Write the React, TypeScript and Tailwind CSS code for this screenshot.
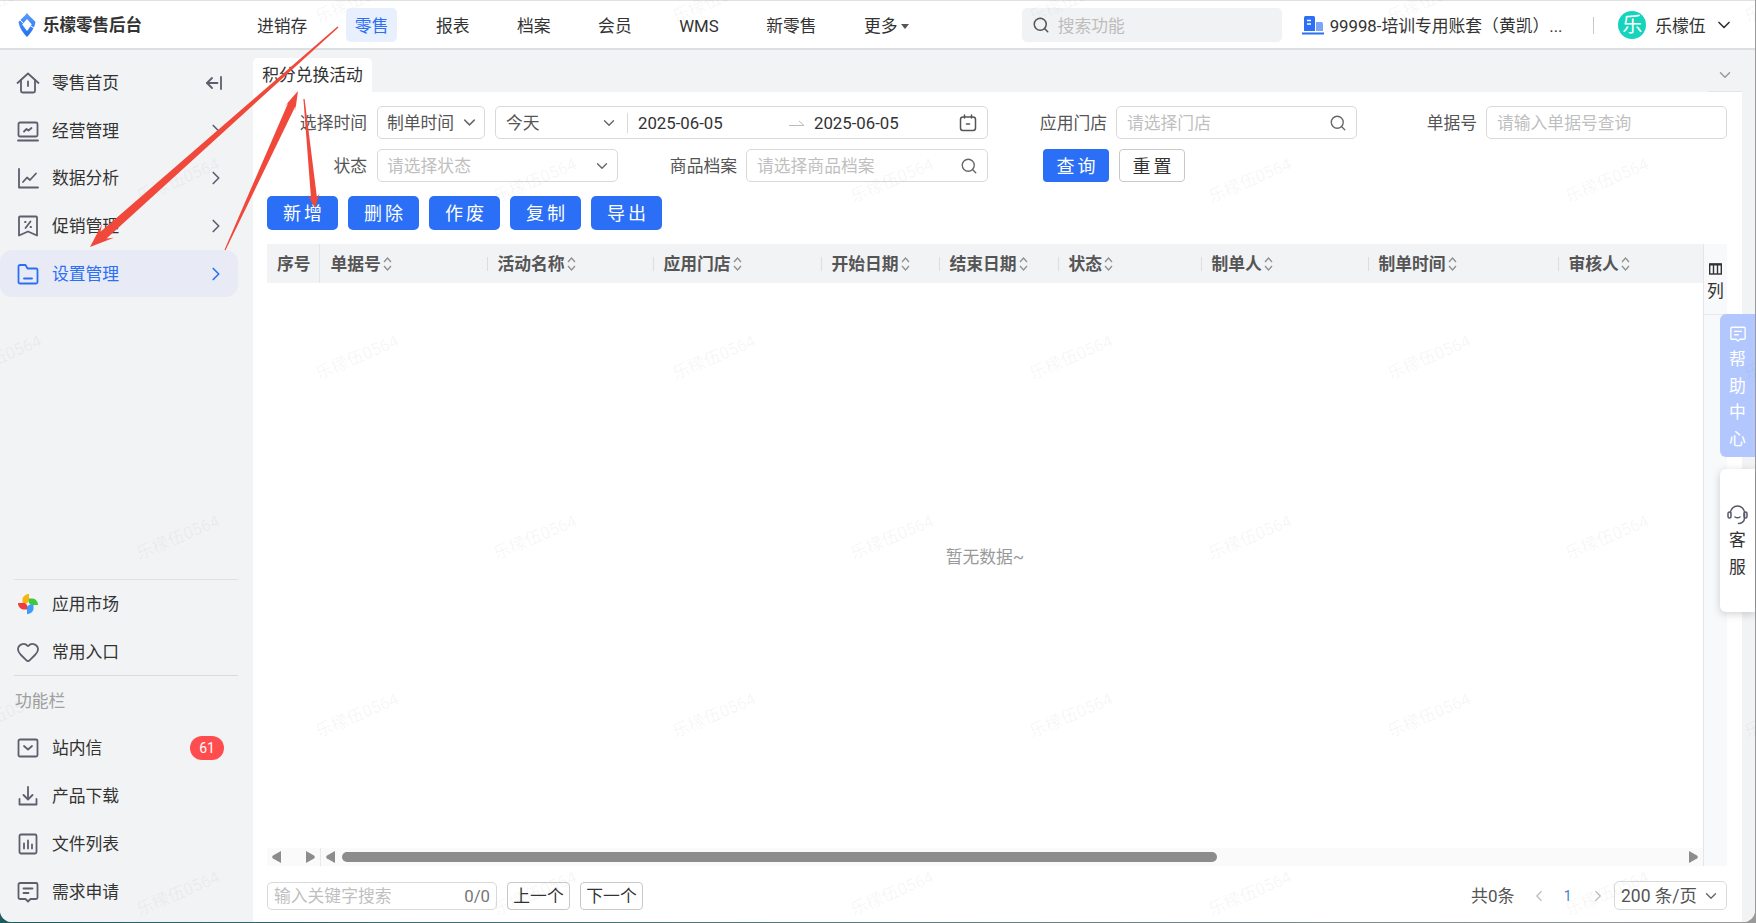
import React from "react";
import { ChevronDown, ChevronRight, ChevronLeft, Search, Heart } from "lucide-react";

const G = { fill: "none", stroke: "currentColor", strokeWidth: 1.8, strokeLinecap: "round", strokeLinejoin: "round" } as const;

const IHome = () => (
  <svg width="24" height="24" viewBox="0 0 24 24" {...G}>
    <path d="M1.5 12 12 2.5 22.5 12" />
    <path d="M5 9.5V20a1.5 1.5 0 0 0 1.5 1.5h11A1.5 1.5 0 0 0 19 20V9.5" />
    <path d="M12 10.5v4.5" />
  </svg>
);
const ILaptop = () => (
  <svg width="24" height="24" viewBox="0 0 24 24" {...G}>
    <rect x="2.5" y="3.5" width="19" height="14" rx="1.5" />
    <path d="M2 21.5h20" />
    <path d="M8 12.5l2.5-2.5 2 1.5 3-2.5" />
  </svg>
);
const IChart = () => (
  <svg width="24" height="24" viewBox="0 0 24 24" {...G}>
    <path d="M3 3v18.5h19" />
    <path d="M7 16l4-4.5 3 2.5 6-6.5" />
  </svg>
);
const IPromo = () => (
  <svg width="24" height="24" viewBox="0 0 24 24" {...G}>
    <path d="M4 2.5h16a1 1 0 0 1 1 1v18l-9-4-9 4v-18a1 1 0 0 1 1-1Z" />
    <path d="M14.5 7.5l-5 6.5" />
    <path d="M9 8h.6M14.5 13h.6" />
  </svg>
);
const IFolder = () => (
  <svg width="24" height="24" viewBox="0 0 24 24" {...G}>
    <path d="M2.5 4.5a1.5 1.5 0 0 1 1.5-1.5h5.5l2 3.5H20A1.5 1.5 0 0 1 21.5 8v12a1.5 1.5 0 0 1-1.5 1.5H4A1.5 1.5 0 0 1 2.5 20Z" />
    <path d="M8 16.5h8" />
  </svg>
);
const blade = "M13 2v7.200L10.800 11.200H6.500V7.500C6.500 4.500 9.500 2 13 2Z";
const IMarket = () => (
  <svg width="24" height="24" viewBox="0 0 24 24">
    <path d={blade} fill="#fbb40f" />
    <path d={blade} fill="#3fc93f" transform="rotate(90 12 12)" />
    <path d={blade} fill="#3d9bfa" transform="rotate(180 12 12)" />
    <path d={blade} fill="#f03c3c" transform="rotate(270 12 12)" />
  </svg>
);
const IMail = () => (
  <svg width="24" height="24" viewBox="0 0 24 24" {...G}>
    <rect x="2.5" y="3.5" width="19" height="17" rx="1.5" />
    <path d="M8 10l4 3.5 4-3.5" />
  </svg>
);
const IDownload = () => (
  <svg width="24" height="24" viewBox="0 0 24 24" {...G}>
    <path d="M3.5 15v5.500h17V15" />
    <path d="M12 3v12" />
    <path d="M7.500 11l4.500 4.500 4.500-4.500" />
  </svg>
);
const IFile = () => (
  <svg width="24" height="24" viewBox="0 0 24 24" {...G}>
    <rect x="3.500" y="2.500" width="17" height="19" rx="1.500" />
    <path d="M8 11.500v5M12 8.500v8M16 12.500v4" />
  </svg>
);
const IFeedback = ({ size = 24 }: { size?: number }) => (
  <svg width={size} height={size} viewBox="0 0 24 24" {...G}>
    <path d="M4 3h16a1.500 1.500 0 0 1 1.500 1.500v13A1.500 1.500 0 0 1 20 19h-5.500L12 21.500 9.500 19H4a1.500 1.500 0 0 1-1.500-1.500v-13A1.500 1.500 0 0 1 4 3Z" />
    <path d="M7.500 8.500h9M7.500 13h5" />
  </svg>
);
const ICollapse = () => (
  <svg width="18" height="18" viewBox="0 0 18 18" fill="none" stroke="currentColor" strokeWidth="1.8" strokeLinecap="round" strokeLinejoin="round">
    <path d="M16 3v12" />
    <path d="M12.500 9H2" />
    <path d="M7 4 2 9l5 5" />
  </svg>
);
const Sort = () => (
  <svg width="9" height="16" viewBox="0 0 9 16" fill="none" stroke="#8f8f8f" strokeWidth="1.300" className="ml-[2px] shrink-0">
    <path d="M1 6l3.500-4L8 6" />
    <path d="M1 10l3.500 4L8 10" />
  </svg>
);
const Logo = () => (
  <svg width="18" height="24" viewBox="0 0 18 24">
    <defs>
      <linearGradient id="lg" x1="0" y1="0" x2="0" y2="1">
        <stop offset="0" stopColor="#5a9dfb" />
        <stop offset="1" stopColor="#1f6ff0" />
      </linearGradient>
    </defs>
    <path d="M9 0C11 3 15 6 17.500 9C16.500 15 12.500 20.500 9 24C5.500 20.500 1.500 15 .5 9C3 6 7 3 9 0Z" fill="url(#lg)" />
    <path d="M9 6 13.800 11.500 9 18 4.200 11.500Z" fill="#ffffff" />
    <path d="M2 7 5.500 10.500M16 15 12.500 13" stroke="#ffffff" strokeWidth="1" />
  </svg>
);
const Building = () => (
  <svg width="22" height="19" viewBox="0 0 22 19">
    <path d="M2 1.500A1.500 1.500 0 0 1 3.500 0h8A1.500 1.500 0 0 1 13 1.500V15H2Z" fill="#2a6ff5" />
    <path d="M14 6h5.500A1.500 1.500 0 0 1 21 7.500V15h-7Z" fill="#7aa5f8" />
    <path d="M0 16.500h22V18.500H0Z" fill="#2a6ff5" />
    <path d="M5 4.500h4M5 8h4" stroke="#fff" strokeWidth="1.600" />
  </svg>
);
const Headset = () => (
  <svg width="21" height="21" viewBox="0 0 21 21" fill="none" stroke="#565a68" strokeWidth="1.500" strokeLinecap="round">
    <path d="M3.500 9a7 7 0 0 1 14 0v4" />
    <rect x="1" y="8" width="3" height="6" rx="1.500" />
    <rect x="17" y="8" width="3" height="6" rx="1.500" />
    <path d="M17.500 14c0 3.500-3 5.500-6 5.500" />
    <path d="M8 13c1.500 1 3.500 1 5 0" />
  </svg>
);

const Arrow = ({ x1, y1, x2, y2, head, headW, neck, tail = 0.7 }: { x1: number; y1: number; x2: number; y2: number; head: number; headW: number; neck: number; tail?: number }) => {
  const dx = x2 - x1;
  const dy = y2 - y1;
  const L = Math.hypot(dx, dy);
  const ux = dx / L;
  const uy = dy / L;
  const p = (t: number, w: number) => `${(x1 + ux * t - uy * w).toFixed(1)},${(y1 + uy * t + ux * w).toFixed(1)}`;
  const pts = [p(0, tail), p(L - head * 0.75, neck), p(L - head, headW), p(L, 0), p(L - head, -headW), p(L - head * 0.75, -neck), p(0, -tail)].join(" ");
  return <polygon points={pts} fill="#f0493c" />;
};

const rowIcon = "w-6 h-6 flex items-center justify-center shrink-0";

function SideRow({ icon, label, active, chevron, extra, tall }: { icon: React.ReactNode; label: string; active?: boolean; chevron?: boolean; extra?: React.ReactNode; tall?: boolean }) {
  return (
    <div className={`${tall ? "h-[48px]" : "h-[47.6px]"} w-[238px] flex items-center pl-4 rounded-[12px] ${active ? "bg-[#e8ebf5] text-[#2a6ff5]" : "text-[#333333]"}`}>
      <span className={`${rowIcon} ${active ? "text-[#2a6ff5]" : "text-[#5b5f6e]"}`}>{icon}</span>
      <span className="ml-3 flex-1">{label}</span>
      {chevron && <ChevronRight size={22} strokeWidth={1.800} className={`mr-[11px] ${active ? "text-[#2a6ff5]" : "text-[#5b5f6e]"}`} />}
      {extra}
    </div>
  );
}

function Sidebar() {
  return (
    <aside className="w-[253px] shrink-0 bg-[#f2f3f5] flex flex-col pt-[9.500px] pb-[6px]">
      <SideRow icon={<IHome />} label="零售首页" extra={<span className="mr-[15px] text-[#5b5f6e] flex"><ICollapse /></span>} />
      <SideRow icon={<ILaptop />} label="经营管理" chevron />
      <SideRow icon={<IChart />} label="数据分析" chevron />
      <SideRow icon={<IPromo />} label="促销管理" chevron />
      <SideRow icon={<IFolder />} label="设置管理" chevron active />
      <div className="mt-auto">
        <div className="mx-[14px] w-[224px] h-px bg-[#dfe1e5]" />
        <SideRow tall icon={<IMarket />} label="应用市场" />
        <SideRow tall icon={<Heart size={24} strokeWidth={1.8} />} label="常用入口" />
        <div className="mx-[14px] w-[224px] h-px bg-[#d9dbdf] -mt-px" />
        <div className="h-[48px] pt-px flex items-center pl-[15px] text-[#a0a0a0]">功能栏</div>
        <SideRow
          tall
          icon={<IMail />}
          label="站内信"
          extra={<span className="mr-[14px] w-[34px] h-6 rounded-full bg-[#ff4d4f] text-white text-[14px] flex items-center justify-center">61</span>}
        />
        <SideRow tall icon={<IDownload />} label="产品下载" />
        <SideRow tall icon={<IFile />} label="文件列表" />
        <SideRow tall icon={<IFeedback />} label="需求申请" />
      </div>
    </aside>
  );
}

const navItems = ["进销存", "零售", "报表", "档案", "会员", "WMS", "新零售"];

function Header() {
  return (
    <header className="h-[50px] shrink-0 bg-white border-t border-t-[#e0e0e0] border-b-2 border-b-[#dcdee2] pt-px flex items-center relative">
      <span className="ml-[18px] flex shrink-0"><Logo /></span>
      <span className="ml-[7px] w-[100px] text-[#333333] font-bold text-[16.500px] whitespace-nowrap pt-[2px]">乐檬零售后台</span>
      <nav className="ml-[105px] flex items-center gap-[29.500px] text-[#333333]">
        {navItems.map((n) => (
          <span key={n} className={`h-[34px] px-[9px] pt-[2px] flex items-center rounded-[5px] ${n === "零售" ? "bg-[#e8effd] text-[#2a6ff5]" : ""}`}>{n}</span>
        ))}
        <span className="h-[34px] px-[9px] pt-[2px] flex items-center">
          更多
          <svg width="8" height="5" viewBox="0 0 8 5" className="ml-[3px]"><path d="M0 0h8L4 5Z" fill="#555" /></svg>
        </span>
      </nav>
      <div className="ml-[104px] w-[260px] h-[34px] bg-[#f1f2f4] rounded-[5px] flex items-center pl-[10px]">
        <Search size={18} strokeWidth={2} className="text-[#555] shrink-0" />
        <input readOnly placeholder="搜索功能" className="ml-2 w-[200px] pt-[2px] bg-transparent outline-none placeholder:text-[#bdbdbd]" />
      </div>
      <span className="ml-5 flex shrink-0"><Building /></span>
      <span className="ml-[6px] w-[245px] pt-[2px] text-[#333333] whitespace-nowrap overflow-hidden">99998-培训专用账套（黄凯）...</span>
      <span className="ml-[18.500px] w-px h-[17px] bg-[#c9c9c9]" />
      <span className="ml-6 w-7 h-7 rounded-full bg-[#14d4bc] text-white text-[20px] flex items-center justify-center shrink-0">乐</span>
      <span className="ml-[9px] pt-[2px] text-[#333333]">乐檬伍</span>
      <ChevronDown size={20} strokeWidth={2} className="ml-[9px] text-[#333]" />
    </header>
  );
}

const inputBox = "h-[33px] border border-[#d9d9d9] rounded-[5px] bg-white flex items-center shrink-0";

function Label({ w, text }: { w: string; text: string }) {
  return <span className={`${w} shrink-0 text-right text-[#555555]`}>{text}</span>;
}

function SearchInput({ w, placeholder }: { w: string; placeholder: string }) {
  return (
    <div className={`${inputBox} ${w} pl-[10px] pr-[9px]`}>
      <input readOnly placeholder={placeholder} className="flex-1 min-w-0 outline-none placeholder:text-[#bfbfbf]" />
      <Search size={18} strokeWidth={1.800} className="text-[#666]" />
    </div>
  );
}

function Filters() {
  return (
    <div className="flex flex-col gap-[10px] pt-[14px]">
      <div className="flex items-center">
        <Label w="w-[114px]" text="选择时间" />
        <div className={`${inputBox} ml-[10px] w-[108px] pl-[9px] justify-between pr-[5px] text-[#555555]`}>
          制单时间
          <ChevronDown size={19} strokeWidth={1.800} className="text-[#666]" />
        </div>
        <div className={`${inputBox} ml-[10px] w-[493px] text-[#333333]`}>
          <span className="ml-[10px] w-[94px] text-[#555555]">今天</span>
          <ChevronDown size={18} strokeWidth={1.800} className="text-[#666]" />
          <span className="ml-[9px] w-px h-[20px] bg-[#d9d9d9]" />
          <span className="ml-[10px] w-[151px]">2025-06-05</span>
          <svg width="16" height="8" viewBox="0 0 16 8" fill="none" stroke="#bcbcbc" strokeWidth="1"><path d="M0 6.500h15L10 2" /></svg>
          <span className="ml-[9px] w-[145px]">2025-06-05</span>
          <svg width="18" height="18" viewBox="0 0 18 18" fill="none" stroke="#555" strokeWidth="1.500" strokeLinecap="round"><rect x="1.500" y="3" width="15" height="13.500" rx="2.500" /><path d="M5.500 1v3M12.500 1v3M7.500 10h3" /></svg>
        </div>
        <Label w="w-[119px]" text="应用门店" />
        <div className="ml-[9px]"><SearchInput w="w-[241px]" placeholder="请选择门店" /></div>
        <Label w="w-[120px]" text="单据号" />
        <div className={`${inputBox} ml-[9px] w-[241px] pl-[10px]`}>
          <input readOnly placeholder="请输入单据号查询" className="w-full outline-none placeholder:text-[#bfbfbf]" />
        </div>
      </div>
      <div className="flex items-center">
        <Label w="w-[114px]" text="状态" />
        <div className={`${inputBox} ml-[10px] w-[241px] pl-[9px] justify-between pr-[6px] text-[#bfbfbf]`}>
          请选择状态
          <ChevronDown size={18} strokeWidth={1.800} className="text-[#666]" />
        </div>
        <Label w="w-[119px]" text="商品档案" />
        <div className="ml-[9px]"><SearchInput w="w-[242px]" placeholder="请选择商品档案" /></div>
        <button className="ml-[55px] w-[66px] h-[33px] rounded-[4px] bg-[#2a6ff5] text-white text-[18px] tracking-[3px] pl-[3px] pt-[2px]">查询</button>
        <button className="ml-[10px] w-[66px] h-[33px] rounded-[4px] border border-[#c9c9c9] bg-white text-[#333333] text-[18px] tracking-[3px] pl-[3px] pt-[2px]">重置</button>
      </div>
    </div>
  );
}

const cols: { w: string; label: string; line: boolean }[] = [
  { w: "w-[167px]", label: "单据号", line: false },
  { w: "w-[166px]", label: "活动名称", line: true },
  { w: "w-[168px]", label: "应用门店", line: true },
  { w: "w-[118px]", label: "开始日期", line: true },
  { w: "w-[119px]", label: "结束日期", line: true },
  { w: "w-[143px]", label: "状态", line: true },
  { w: "w-[167px]", label: "制单人", line: true },
  { w: "w-[190px]", label: "制单时间", line: true },
  { w: "w-[145px]", label: "审核人", line: true },
];

const Tri = ({ dir }: { dir: "l" | "r" }) => (
  <svg width="9" height="12" viewBox="0 0 9 12" className="shrink-0">
    <path d={dir === "l" ? "M9 0v12L1 7.500a1.800 1.800 0 0 1 0-3Z" : "M0 0v12l8-4.500a1.800 1.800 0 0 0 0-3Z"} fill="#8c8c8c" />
  </svg>
);

function TableArea() {
  return (
    <div className="mt-[14px] ml-[14px] w-[1460px] flex">
      <div className="w-[1436px] flex flex-col">
        <div className="h-[39px] bg-[#f2f3f5] flex items-center font-bold text-[#555555]">
          <span className="w-[53px] h-full shrink-0 flex items-center pl-[10px] border-r border-[#e3e4e8]">序号</span>
          {cols.map((c) => (
            <div key={c.label} className={`${c.w} shrink-0 flex items-center h-full`}>
              <span className={`w-px h-[14px] ${c.line ? "bg-[#dcdde1]" : "bg-transparent"}`} />
              <span className="ml-[9.500px]">{c.label}</span>
              <Sort />
            </div>
          ))}
        </div>
        <div className="h-[565px] flex items-center justify-center pb-[18px] text-[#999999]">暂无数据~</div>
        <div className="h-[18px] bg-[#fafafa] flex items-center pl-[5px]">
          <Tri dir="l" />
          <span className="ml-[25px]"><Tri dir="r" /></span>
          <span className="ml-[5px] w-px h-full bg-[#e8e8e8]" />
          <span className="ml-[5px]"><Tri dir="l" /></span>
          <span className="ml-[7px] w-[875px] h-[10px] rounded-full bg-[#8c8c8c]" />
          <span className="ml-auto mr-[5px]"><Tri dir="r" /></span>
        </div>
      </div>
      <div className="w-6 bg-[#f8f9fb] border-l border-[#e5e6eb]">
        <div className="h-[71px] border-b border-[#e8e9ed] flex flex-col items-center pt-[19px] text-[#333333]">
          <svg width="13" height="12" viewBox="0 0 13 12" fill="none" stroke="#333" strokeWidth="1.400">
            <rect x="0.700" y="1" width="11.600" height="10" />
            <path d="M4.500 1v10M8.500 1v10" />
            <path d="M0.700 1.500h11.600" strokeWidth="2" />
          </svg>
          <span className="mt-1 leading-[24px]">列</span>
        </div>
      </div>
    </div>
  );
}

function Pager() {
  return (
    <div className="mt-[15px] ml-[14px] w-[1460px] flex items-center">
      <div className="w-[230px] h-[28px] border border-[#d9d9d9] rounded-[5px] flex items-center pl-[6px] pr-[6px]">
        <input readOnly placeholder="输入关键字搜索" className="flex-1 min-w-0 outline-none placeholder:text-[#bfbfbf]" />
        <span className="text-[#777777]">0/0</span>
      </div>
      <button className="ml-[10px] w-[63px] h-[28px] border border-[#c9c9c9] rounded-[4px] text-[#333333]">上一个</button>
      <button className="ml-[10px] w-[63px] h-[28px] border border-[#c9c9c9] rounded-[4px] text-[#333333]">下一个</button>
      <span className="ml-auto text-[#555555] text-[17px]">共0条</span>
      <ChevronLeft size={18} strokeWidth={1.500} className="ml-[15px] text-[#bbbbbb]" />
      <span className="ml-[16px] text-[14px] text-[#4d7fd0]">1</span>
      <ChevronRight size={18} strokeWidth={1.500} className="ml-[17px] text-[#bbbbbb]" />
      <div className="ml-[7.500px] w-[113px] h-[29px] border border-[#d9d9d9] rounded-[5px] flex items-center justify-between pl-[6px] pr-[6px] text-[#555555] text-[17.500px]">
        200 条/页
        <ChevronDown size={18} strokeWidth={1.800} className="text-[#666]" />
      </div>
    </div>
  );
}

function Main() {
  return (
    <main className="flex-1 min-w-0 flex flex-col pr-[13px] bg-[#f2f3f5]">
      <div className="h-[42px] pt-2 flex justify-between shrink-0">
        <div className="w-[119px] h-[34px] bg-white rounded-t-[5px] flex items-center justify-center text-[#333333]">积分兑换活动</div>
        <div className="w-[34px] h-[34px] rounded-t-[5px] border-b border-[#e3e4e8] flex items-center justify-center">
          <ChevronDown size={18} strokeWidth={2} className="text-[#9a9a9a]" />
        </div>
      </div>
      <div className="flex-1 bg-white">
        <Filters />
        <div className="mt-[14px] ml-[14px] flex gap-[10px]">
          {["新增", "删除", "作废", "复制", "导出"].map((b) => (
            <button key={b} className="w-[71px] h-[34px] rounded-[5px] bg-[#2a6ff5] text-white text-[18px] tracking-[3px] pl-[3px] pt-[2px]">{b}</button>
          ))}
        </div>
        <TableArea />
        <Pager />
      </div>
    </main>
  );
}

const marks: { x: number; y: number }[] = [
  ...[0, 357, 714, 1071, 1429, 1786].flatMap((x) => [0, 357, 715].map((y) => ({ x, y }))),
  ...[178, 535, 892, 1250, 1607].flatMap((x) => [180, 537, 893].map((y) => ({ x, y }))),
];

export default function App() {
  return (
    <div className="relative w-[1756px] h-[923px] overflow-hidden bg-linear-to-r from-[#1f5a5c] to-[#9a9a9a] text-[16.800px] leading-[24px] font-['Roboto','Noto_Sans_CJK_SC',sans-serif]">
      <div className="w-[1755px] h-[922px] bg-white rounded-b-[12px] overflow-hidden flex flex-col">
        <Header />
        <div className="flex-1 min-h-0 flex">
          <Sidebar />
          <Main />
        </div>
      </div>

      <div className="absolute right-px top-[314px] w-[35px] h-[143px] rounded-l-[6px] bg-[#b3c7ff] text-white flex flex-col items-center pt-[11px]">
        <span className="flex w-[18px] h-[18px]"><IFeedback size={18} /></span>
        <span className="mt-[4px] leading-[24px]">帮</span>
        <span className="mt-[2.500px] leading-[24px]">助</span>
        <span className="mt-[2.500px] leading-[24px]">中</span>
        <span className="mt-[2.500px] leading-[24px]">心</span>
      </div>
      <div className="absolute right-px top-[469px] w-[35px] h-[143px] rounded-l-[6px] bg-white shadow-[0_2px_8px_rgba(0,0,0,0.18)] text-[#333333] flex flex-col items-center pt-[35px]">
        <Headset />
        <span className="mt-[2px] leading-[27px]">客</span>
        <span className="leading-[27px]">服</span>
      </div>

      {marks.map((m) => (
        <span
          key={`${m.x}-${m.y}`}
          className="absolute pointer-events-none text-[16.800px] text-black/5 whitespace-nowrap -translate-x-1/2 -translate-y-1/2 -rotate-[23deg]"
          style={{ left: m.x, top: m.y }}
        >
          乐檬伍0564
        </span>
      ))}

      <svg className="absolute inset-0 pointer-events-none" width="1756" height="923" viewBox="0 0 1756 923">
        <Arrow x1={338} y1={27} x2={90} y2={247} head={24} headW={9} neck={4.500} />
        <Arrow x1={225} y1={250} x2={298} y2={91} head={20} headW={6} neck={4} tail={0.6} />
        <Arrow x1={304} y1={99} x2={315} y2={208} head={14} headW={6} neck={3} tail={0.6} />
      </svg>
    </div>
  );
}
